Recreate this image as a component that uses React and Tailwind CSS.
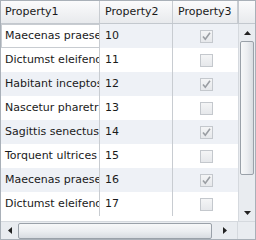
import React from "react";

const rows = [
  ["Maecenas praesent", 10, true],
  ["Dictumst eleifend", 11, false],
  ["Habitant inceptos", 12, true],
  ["Nascetur pharetra", 13, false],
  ["Sagittis senectus", 14, true],
  ["Torquent ultrices", 15, false],
  ["Maecenas praesent", 16, true],
  ["Dictumst eleifend", 17, false],
];

function Check({ checked }) {
  return (
    <div className="w-[13px] h-[13px] border border-[#c4c8cd] bg-gradient-to-b from-[#f4f5f6] to-[#e6e8eb] flex items-center justify-center">
      {checked && (
        <svg width="11" height="11" viewBox="0 0 11 11">
          <path d="M2 5.5 L4.3 8.3 L9 1.8" fill="none" stroke="#9a9ea3" strokeWidth="1.6" />
        </svg>
      )}
    </div>
  );
}

export default function App() {
  return (
    <div
      className="w-[256px] h-[240px] bg-white border border-[#a9b0b8] flex flex-col overflow-hidden text-[11px] text-[#1a1a1a]"
      style={{ fontFamily: '"DejaVu Sans", Verdana, sans-serif' }}
    >
      <div className="flex flex-1 min-h-0">
        <div className="flex flex-col w-[237px]">
          <div className="flex h-[23px] border-b border-[#c3c8ce] bg-gradient-to-b from-[#fbfbfc] to-[#e8eaed]">
            <div className="w-[99px] border-r border-[#c8ccd1] pl-[4px] flex items-center">Property1</div>
            <div className="w-[73px] border-r border-[#c8ccd1] pl-[5px] flex items-center">Property2</div>
            <div className="w-[65px] border-r border-[#c8ccd1] pl-[5px] flex items-center">Property3</div>
          </div>
          {rows.map((r, i) => (
            <div key={i} className={`flex h-[24px] ${i % 2 === 0 ? "bg-[#eef1f6]" : "bg-white"}`}>
              <div
                className={`w-[99px] border-r border-[#c8ccd1] flex items-center overflow-hidden whitespace-nowrap ${
                  i === 0 ? "border border-[#7ec3d6] bg-white pl-[3px]" : "pl-[4px]"
                }`}
              >
                {r[0]}
              </div>
              <div className="w-[73px] border-r border-[#c8ccd1] pl-[5px] flex items-center">{r[1]}</div>
              <div className="w-[65px] flex items-center justify-center pl-[2px]">
                <Check checked={r[2]} />
              </div>
            </div>
          ))}
        </div>
        <div className="flex flex-col w-[18px]">
          <div className="h-[23px] border-b border-l border-[#c3c8ce] bg-gradient-to-b from-[#fbfbfc] to-[#e8eaed]" />
          <div className="flex-1 flex flex-col bg-[#e9ecf0] border-l border-[#d5d9de]">
            <div className="h-[17px] flex items-center justify-center">
              <svg width="7" height="4" viewBox="0 0 7 4"><path d="M0 4 L3.5 0 L7 4 Z" fill="#222" /></svg>
            </div>
            <div className="mx-[1px] h-[134px] rounded-[2px] border border-[#9aa1a9] bg-gradient-to-r from-[#f7f8f9] via-[#eceef1] to-[#d8dce1]" />
            <div className="flex-1" />
            <div className="h-[17px] flex items-center justify-center">
              <svg width="7" height="4" viewBox="0 0 7 4"><path d="M0 0 L3.5 4 L7 0 Z" fill="#222" /></svg>
            </div>
          </div>
        </div>
      </div>
      <div className="flex h-[18px] bg-[#e9ecf0] border-t border-[#d5d9de]">
        <div className="w-[237px] flex items-center">
          <div className="w-[17px] h-full flex items-center justify-center">
            <svg width="4" height="7" viewBox="0 0 4 7"><path d="M4 0 L0 3.5 L4 7 Z" fill="#222" /></svg>
          </div>
          <div className="w-[194px] h-[16px] rounded-[2px] border border-[#9aa1a9] bg-gradient-to-b from-[#f7f8f9] via-[#eceef1] to-[#d8dce1]" />
          <div className="flex-1 h-full flex items-center justify-center">
            <svg width="4" height="7" viewBox="0 0 4 7"><path d="M0 0 L4 3.5 L0 7 Z" fill="#222" /></svg>
          </div>
        </div>
        <div className="w-[18px] border-l border-[#d5d9de] bg-[#e9ecf0]" />
      </div>
    </div>
  );
}
